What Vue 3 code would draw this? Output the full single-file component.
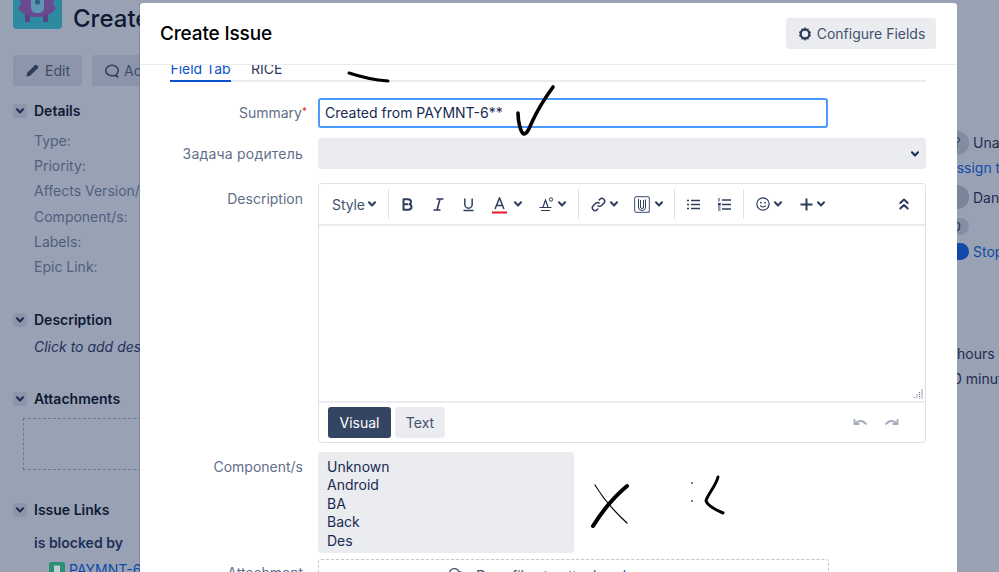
<script setup>
const details = ['Type:', 'Priority:', 'Affects Version/s:', 'Component/s:', 'Labels:', 'Epic Link:']
const components = ['Unknown', 'Android', 'BA', 'Back', 'Des']
</script>

<template>
  <div class="page">
    <svg class="defs" width="0" height="0" aria-hidden="true">
      <symbol id="chev" viewBox="0 0 8 6">
        <path d="M1 1.300 4 4.500l3-3.200" fill="none" stroke="currentColor" stroke-width="2" stroke-linecap="round" stroke-linejoin="round" />
      </symbol>
    </svg>

    <main class="issue">
      <div class="issue-head">
        <div class="logo">
          <svg width="49" height="49" viewBox="0 0 49 49">
            <rect width="49" height="49" rx="4" fill="#2d8a9f" />
            <circle cx="24" cy="20" r="17" fill="#6a4b92" />
            <path d="M5 28c3 6 11 9 19 9s16-3 19-9l-4-4H9z" fill="#6a4b92" />
            <path d="M12 34v8h5v-6zM30 36v6h5v-8z" fill="#5a4286" />
            <rect x="18" y="0" width="13" height="33" rx="5" fill="#5d95b4" />
            <circle cx="24.500" cy="22" r="2.500" fill="#2f5c80" />
          </svg>
        </div>
        <h1 class="issue-title">Create new feature</h1>
      </div>
      <div class="actions">
        <button class="act act-edit">
          <svg width="15" height="15" viewBox="0 0 16 16"><path d="M1.500 14.500l.8-4L10.500 2.300a1.500 1.500 0 0 1 2.100 0l1.100 1.100a1.500 1.500 0 0 1 0 2.100L5.500 13.700z" fill="#2e3d5c" /></svg>
          <span>Edit</span>
        </button>
        <button class="act">
          <svg width="16" height="16" viewBox="0 0 16 16"><path d="M8 2.200c3.500 0 6.200 2.400 6.200 5.300 0 1.500-.7 2.800-1.800 3.800l1 2.400-3-1.300c-.8.200-1.500.3-2.400.3-3.500 0-6.200-2.300-6.200-5.200S4.500 2.200 8 2.200z" fill="none" stroke="#2e3d5c" stroke-width="1.500" /></svg>
          <span>Add comment</span>
        </button>
      </div>

      <section class="sec sec-details">
        <h2 class="sec-head"><span class="toggle"><svg class="ic-chev"><use href="#chev" /></svg></span>Details</h2>
        <ul class="detail-list">
          <li v-for="d in details" :key="d">{{ d }}</li>
        </ul>
      </section>

      <section class="sec sec-desc">
        <h2 class="sec-head"><span class="toggle"><svg class="ic-chev"><use href="#chev" /></svg></span>Description</h2>
        <p class="click-add">Click to add description</p>
      </section>

      <section class="sec sec-attach">
        <h2 class="sec-head"><span class="toggle"><svg class="ic-chev"><use href="#chev" /></svg></span>Attachments</h2>
        <div class="drop-old"></div>
      </section>

      <section class="sec sec-links">
        <h2 class="sec-head"><span class="toggle"><svg class="ic-chev"><use href="#chev" /></svg></span>Issue Links</h2>
        <p class="blocked">is blocked by</p>
        <div class="linked">
          <svg width="16" height="16" viewBox="0 0 16 16"><rect width="16" height="16" rx="2" fill="#2f8f74" /><path d="M5 3.500h6v9L8 10l-3 2.500z" fill="#bcd0d0" /></svg>
          <a>PAYMNT-6</a>
        </div>
      </section>
    </main>

    <aside class="people">
      <div class="person person-una"><span class="avatar avatar-una">?</span><span>Unassigned</span></div>
      <a class="assign">Assign to me</a>
      <div class="person person-dan"><span class="avatar avatar-dan"></span><span>Daniil</span></div>
      <div class="pill-row"><span class="pill">0</span></div>
      <div class="stop-row"><span class="stop"></span><a>Stop watching</a></div>
      <div class="time time-a">hours</div>
      <div class="time time-b">0 minutes</div>
    </aside>

    <div class="modal">
      <header class="modal-head">
        <h2>Create Issue</h2>
        <button class="config">
          <svg width="16" height="16" viewBox="0 0 16 16">
            <path d="M8 1l1.300 1.800 2.200-.4.400 2.200L14 6l-.8 2 .8 2-2.100 1.400-.4 2.200-2.200-.4L8 15l-1.300-1.800-2.200.4-.4-2.200L2 10l.8-2L2 6l2.100-1.400.4-2.200 2.200.4z" fill="#2e3d5c" />
            <circle cx="8" cy="8" r="3.200" fill="#ebecf0" />
          </svg>
          <span>Configure Fields</span>
        </button>
      </header>

      <div class="modal-body">
        <nav class="tabs">
          <span class="tab tab-on">Field Tab</span>
          <span class="tab">RICE</span>
        </nav>

        <div class="row row-summary">
          <label class="lbl lbl-sum">Summary<i class="req">*</i></label>
          <div class="summary-input">Created from PAYMNT-6**</div>
        </div>

        <div class="row row-parent">
          <label class="lbl lbl-parent">Задача родитель</label>
          <div class="select"><svg class="ic-chev"><use href="#chev" /></svg></div>
        </div>

        <div class="row row-editor">
          <label class="lbl lbl-desc">Description</label>
          <div class="editor">
            <div class="toolbar">
              <span class="style-txt">Style</span>
              <svg class="ic-chev g4"><use href="#chev" /></svg>
              <span class="sep"></span>
              <svg class="g1" width="11" height="13" viewBox="0 0 11 13"><path d="M1.500 1.200h4.300c2 0 3.200 1 3.200 2.700 0 1.100-.6 2-1.600 2.300 1.300.3 2.100 1.300 2.100 2.600 0 1.900-1.400 3-3.500 3h-4.500z M1.500 6.300h4.500" fill="none" stroke="#2e3d5c" stroke-width="2" stroke-linejoin="round" /></svg>
              <svg class="g20" width="11" height="13" viewBox="0 0 11 13"><path d="M3.500 1h7M.5 12h7M7 1 4 12" fill="none" stroke="#2e3d5c" stroke-width="1.600" /></svg>
              <svg class="g19" width="11" height="15" viewBox="0 0 12 15"><path d="M2 1v6.500a4 4 0 0 0 8 0V1M.5 14h11" fill="none" stroke="#2e3d5c" stroke-width="1.600" /></svg>
              <svg class="g18 low" width="15" height="17" viewBox="0 0 15 17"><path d="M3 12 7.500 1 12 12M4.500 8.500h6" fill="none" stroke="#2e3d5c" stroke-width="1.500" /><rect y="14.500" width="15" height="2" fill="#e5172c" /></svg>
              <svg class="ic-chev g7"><use href="#chev" /></svg>
              <svg class="g17" width="15" height="15" viewBox="0 0 15 15"><path d="M4 10 6.500 3 9 10M.5 10.500h12M2 13.500h9" fill="none" stroke="#2e3d5c" stroke-width="1.200" /><circle cx="12" cy="2.500" r="1.700" fill="none" stroke="#2e3d5c" /></svg>
              <svg class="ic-chev g4"><use href="#chev" /></svg>
              <span class="sep"></span>
              <svg width="15" height="15" viewBox="0 0 15 15"><path d="M6.500 8.500a2.700 2.700 0 0 0 4 0l2.300-2.300a2.700 2.700 0 0 0-3.900-3.900L7.800 3.400M8.500 6.500a2.700 2.700 0 0 0-4 0L2.200 8.800a2.700 2.700 0 0 0 3.900 3.900l1.100-1.100" fill="none" stroke="#2e3d5c" stroke-width="1.500" /></svg>
              <svg class="ic-chev g4"><use href="#chev" /></svg>
              <svg class="g16" width="16" height="17" viewBox="0 0 16 17"><rect x=".6" y=".6" width="14.800" height="15.800" rx="2" fill="none" stroke="#5f6f8d" stroke-width="1.200" /><path d="M4.500 3v8a3.500 3.500 0 0 0 7 0V3.500M6.500 4v7a1.500 1.500 0 0 0 3 0V4" fill="none" stroke="#2e3d5c" stroke-width="1" /></svg>
              <svg class="ic-chev g5"><use href="#chev" /></svg>
              <span class="sep sep-tight"></span>
              <svg width="13" height="11" viewBox="0 0 13 11"><path d="M4 1.500h9M4 5.500h9M4 9.500h9" stroke="#2e3d5c" stroke-width="1.700" /><path d="M0 1.500h2M0 5.500h2M0 9.500h2" stroke="#2e3d5c" stroke-width="1.700" /></svg>
              <svg class="g18" width="13" height="13" viewBox="0 0 13 13"><path d="M4 2h9M4 6.500h9M4 11h9" stroke="#2e3d5c" stroke-width="1.700" /><path d="M1 0v3.500M0 5.500h2.500v1H0v1.500h2.500M0 10h2.500M0 12h2.500" stroke="#2e3d5c" stroke-width="1" fill="none" /></svg>
              <span class="sep"></span>
              <svg width="14" height="14" viewBox="0 0 15 15"><circle cx="7.500" cy="7.500" r="6.600" fill="none" stroke="#2e3d5c" stroke-width="1.300" /><circle cx="5.300" cy="6" r="1" fill="#2e3d5c" /><circle cx="9.700" cy="6" r="1" fill="#2e3d5c" /><path d="M4.500 9.300c1.500 1.800 4.500 1.800 6 0" fill="none" stroke="#2e3d5c" stroke-width="1.200" /></svg>
              <svg class="ic-chev g4"><use href="#chev" /></svg>
              <svg class="g18" width="13" height="13" viewBox="0 0 13 13"><path d="M6.500.5v12M.5 6.500h12" stroke="#2e3d5c" stroke-width="2" /></svg>
              <svg class="ic-chev g4"><use href="#chev" /></svg>
              <svg class="collapse" width="10" height="12" viewBox="0 0 10 12"><path d="M1.300 5 5 1.500 8.700 5M1.300 10.500 5 7l3.700 3.500" fill="none" stroke="#2e3d5c" stroke-width="2" stroke-linecap="round" stroke-linejoin="round" /></svg>
            </div>

            <div class="editor-area">
              <svg class="grip" width="10" height="10" viewBox="0 0 10 10"><path d="M9 .5v9M6.500 3v6.500M4 5.500v4M1.500 8v1.500" stroke="#5d687b" stroke-width="1.200" stroke-dasharray="1 1" /></svg>
            </div>

            <div class="editor-foot">
              <button class="mode mode-on">Visual</button>
              <button class="mode">Text</button>
              <div class="undo">
                <svg width="15" height="9" viewBox="0 0 15 9"><path d="M1.500 1v5h5M2 5.500c3-3.500 8-3.500 11.500 1" fill="none" stroke="#a5adbb" stroke-width="1.800" /></svg>
                <svg width="15" height="9" viewBox="0 0 15 9"><path d="M13.500 1v5h-5M13 5.500c-3-3.500-8-3.500-11.500 1" fill="none" stroke="#a5adbb" stroke-width="1.800" /></svg>
              </div>
            </div>
          </div>
        </div>

        <div class="row row-comp">
          <label class="lbl lbl-comp">Component/s</label>
          <div class="multi">
            <div v-for="c in components" :key="c">{{ c }}</div>
          </div>
        </div>

        <div class="row row-attach">
          <label class="lbl lbl-attach">Attachment</label>
          <div class="drop">
            <svg width="20" height="15" viewBox="0 0 20 15"><path d="M5 13.500a3.800 3.800 0 0 1-.5-7.500 5 5 0 0 1 9.600-1.200A4.300 4.300 0 0 1 15 13.500z" fill="none" stroke="#42526e" stroke-width="1.200" /></svg>
            <span>Drop files to attach or <a class="browse">browse</a></span>
          </div>
        </div>
      </div>
    </div>

    <svg class="ink" width="999" height="572" viewBox="0 0 999 572" aria-hidden="true">
      <g fill="none" stroke="#000" stroke-linecap="round" stroke-linejoin="round">
        <path d="M349 73c12 4 26 7 39 8" stroke-width="3" />
        <path d="M518 113c0 10 3 20 6 21 3 0 5-5 8-12 5-11 13-24 21-35" stroke-width="3.600" />
        <path d="M593 526c10-16 22-30 34-40" stroke-width="4" />
        <path d="M595 485c9 15 21 28 32 38" stroke-width="1.200" />
        <path d="M718 477c-2 9-11 18-12 24 2 5 10 9 17 12" stroke-width="3" />
        <path d="M692 483h.1M692 501h.1" stroke-width="1.800" stroke="#444" />
      </g>
    </svg>
  </div>
</template>

<style>
html, body { margin: 0; background: #99a2b4; }
</style>

<style scoped>
.page {
  position: relative;
  width: 999px;
  height: 572px;
  overflow: hidden;
  display: flex;
  background: #99a2b4;
  font-family: Inter, "Liberation Sans", sans-serif;
  font-size: 14px;
  color: #182b52;
}
.defs { position: absolute; }
.ic-chev { width: 8px; height: 6px; color: #2e3d5c; flex: none; }

/* background issue */
.issue { width: 945px; flex: none; padding-left: 13px; box-sizing: border-box; }
.issue-head { display: flex; align-items: center; gap: 11px; margin-top: -20px; height: 49px; }
.logo { height: 49px; width: 49px; flex: none; }
.logo svg { display: block; }
.issue-title { margin: 27px 0 0; font-size: 24px; line-height: 29px; font-weight: 500; color: #0e1a33; white-space: nowrap; }
.actions { display: flex; gap: 10px; margin-top: 26px; }
.act {
  height: 31px; border: 0; border-radius: 3px; background: #8c95a9; color: #3c4b69;
  font: inherit; display: flex; align-items: center; gap: 4px; padding: 0 12px; white-space: nowrap;
}
.act-edit { gap: 5px; }
.sec-head { margin: 0; font-size: 14px; font-weight: 600; color: #0e1a33; display: flex; align-items: center; gap: 7px; height: 17px; }
.toggle { width: 14px; height: 14px; background: #8c95a9; border-radius: 3px; display: flex; align-items: center; justify-content: center; }
.toggle .ic-chev { color: #1c2d52; }
.sec { margin: 0; }
.sec-details { margin-top: 16px; }
.detail-list { list-style: none; margin: 8.500px 0 0; padding: 0 0 0 21px; color: #4f5f7e; }
.detail-list li { height: 25.400px; line-height: 25.400px; }
.sec-desc { margin-top: 31.500px; }
.click-add { margin: 10px 0 0 21px; font-style: italic; color: #1f3159; line-height: 17px; }
.sec-attach { margin-top: 35px; }
.drop-old { margin: 11px 0 0 10px; height: 50px; border: 1px dashed #6e7a91; }
.sec-links { margin-top: 31px; }
.blocked { margin: 16px 0 0 21px; font-weight: 600; color: #1c2f58; line-height: 17px; }
.linked { display: flex; align-items: center; gap: 4px; margin: 10px 0 0 36px; color: #0f4aa8; }

/* right edge column */
.people { width: 120px; flex: none; color: #1c2d52; white-space: nowrap; }
.person { display: flex; align-items: center; gap: 4px; }
.person-una { margin-top: 130px; height: 25px; }
.avatar { width: 24px; height: 24px; flex: none; border-radius: 50%; background: #828c9f; display: flex; align-items: center; justify-content: center; color: #3c4b69; }
.assign { display: block; margin: 4px 0 0 2px; height: 17px; line-height: 17px; color: #0f4aa8; }
.person-dan { margin-top: 9px; height: 24px; }
.avatar-dan { background: #7a8599; }
.pill-row { margin-top: 9px; height: 17px; }
.pill { display: block; width: 24px; height: 17px; border-radius: 9px; background: #858fa3; text-align: center; line-height: 17px; font-size: 12px; }
.stop-row { display: flex; align-items: center; gap: 4px; margin-top: 8px; height: 17px; color: #0f4aa8; }
.stop { width: 24px; height: 17px; flex: none; border-radius: 9px; background: #0f4aa8; }
.time { height: 25px; line-height: 25px; padding-left: 12px; color: #1c2d52; }
.time-a { margin-top: 81px; }
.time-b { padding-left: 8px; }

/* modal */
.modal {
  position: absolute; left: 140px; top: 3px; width: 817px; height: 569px;
  background: #fff; border-radius: 3px 3px 0 0; overflow: hidden;
  display: flex; flex-direction: column;
  box-shadow: -1px 0 1px rgba(60, 80, 120, .25);
}
.modal-head {
  flex: none; height: 62px; box-sizing: border-box; padding: 15px 21px 0 20px;
  display: flex; justify-content: space-between; align-items: flex-start;
  border-bottom: 1px solid #ebecf0;
}
.modal-head h2 { margin: 0; font-size: 19px; letter-spacing: -.15px; line-height: 31px; font-weight: 500; color: #000; }
.config {
  height: 31px; width: 150px; border: 0; border-radius: 3px; background: #ebecf0; color: #42526e;
  font: inherit; display: flex; align-items: center; justify-content: center; gap: 4px; padding: 0;
}
.modal-body { flex: 1; overflow: hidden; padding-left: 30px; padding-right: 31px; }
.tabs {
  display: flex; gap: 20px; height: 15px; align-items: flex-end;
  border-bottom: 2px solid #ebecf0; color: #2c3b5b;
}
.tab { height: 15px; margin-bottom: -2px; line-height: 3px; box-sizing: border-box; }
.tab-on { width: 61px; color: #0a52cc; border-bottom: 2px solid #0a52cc; text-align: center; }

.row { display: flex; }
.lbl { width: 133px; margin-right: 15px; flex: none; text-align: right; color: #626f88; line-height: 17px; }
.lbl-parent { letter-spacing: .2px; }
.lbl-sum { margin-top: -2px; }
.req { font-style: normal; color: #de350b; font-size: 10px; margin-right: -4px; vertical-align: 3px; }
.row-summary { margin-top: 16px; align-items: center; }
.summary-input {
  width: 510px; height: 30px; box-sizing: border-box; border: 2px solid #4c9aff; border-radius: 3px;
  padding: 0 5px; line-height: 26px; color: #182b52;
}
.row-parent { margin-top: 10px; align-items: center; }
.select {
  width: 608px; height: 31px; background: #ebecf0; border-radius: 3px;
  display: flex; align-items: center; justify-content: flex-end; padding-right: 7px; box-sizing: border-box;
}
.select .ic-chev { color: #182b52; }
.row-editor { margin-top: 14px; }
.lbl-desc { padding-top: 7px; }
.editor { width: 608px; height: 260px; box-sizing: border-box; border: 1px solid #dfe1e6; border-radius: 3px; display: flex; flex-direction: column; }
.toolbar {
  height: 42px; flex: none; box-sizing: border-box; border-bottom: 2px solid #ebecf0;
  display: flex; align-items: center; padding: 0 16px 0 13px; color: #2e3d5c;
}
.style-txt { color: #42526e; width: 32px; letter-spacing: -.1px; }
.sep { width: 1px; height: 30px; background: #dfe1e6; margin: 0 12px; flex: none; }
.sep-tight { margin-left: 11px; }
.low { margin-top: 2px; }
.g1 { margin-left: 1px; }
.g4 { margin-left: 4px; }
.g5 { margin-left: 5px; }
.g7 { margin-left: 7px; }
.g16 { margin-left: 16px; }
.g17 { margin-left: 17px; }
.g18 { margin-left: 18px; }
.g19 { margin-left: 19px; }
.g20 { margin-left: 20px; }
.collapse { margin-left: auto; }
.editor-area { flex: 1; position: relative; }
.grip { position: absolute; right: 2px; bottom: 2px; }
.editor-foot {
  height: 41px; flex: none; box-sizing: border-box; border-top: 2px solid #ebecf0;
  display: flex; align-items: center; gap: 4px; padding: 0 0 1px 9px;
}
.mode { height: 31px; border: 0; border-radius: 3px; background: #ebecf0; color: #42526e; font: inherit; width: 50px; padding: 0; }
.mode-on { width: 63px; background: #344563; color: #fff; }
.undo { margin-left: auto; display: flex; gap: 16px; padding-right: 26px; }
.row-comp { margin-top: 9px; }
.lbl-comp { padding-top: 6px; }
.multi {
  width: 256px; height: 101px; box-sizing: border-box; background: #ebecf0; border-radius: 3px;
  padding: 6px 9px 4px; line-height: 18.400px; color: #182b52;
}
.row-attach { margin-top: 6px; }
.lbl-attach { padding-top: 5px; }
.drop {
  width: 511px; height: 60px; box-sizing: border-box; border: 1px dashed #c1c7d0; border-radius: 3px;
  display: flex; gap: 11px; padding: 7px 0 0 126px; color: #42526e; line-height: 17px; white-space: nowrap;
}
.browse { color: #0052cc; }
.ink { position: absolute; left: 0; top: 0; pointer-events: none; }
</style>
